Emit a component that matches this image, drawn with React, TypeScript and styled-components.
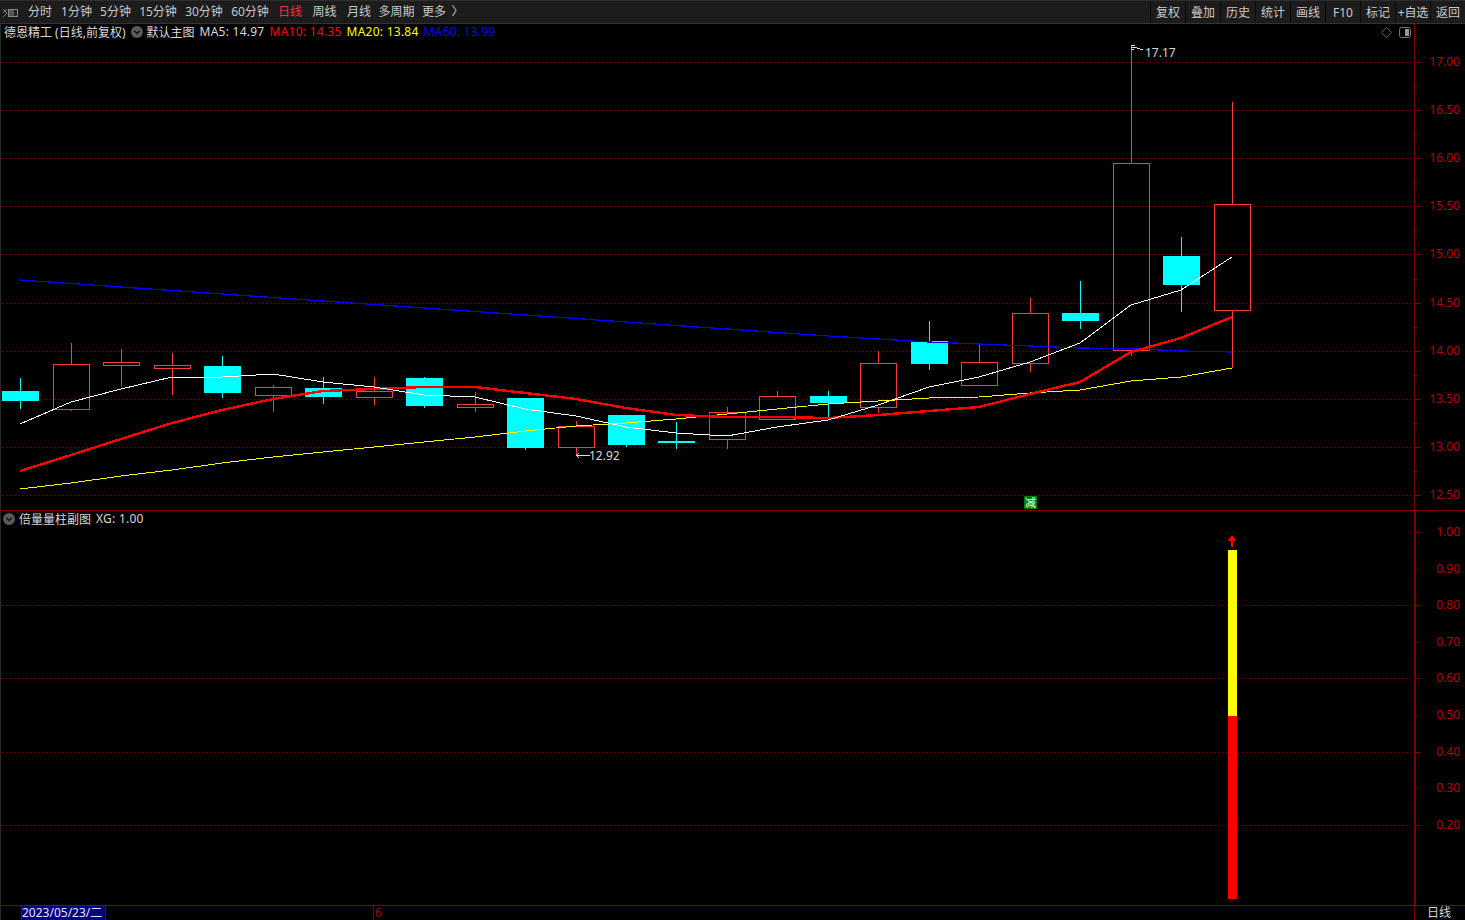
import React from "react";
import styled, { createGlobalStyle } from "styled-components";

const Global = createGlobalStyle`
  html, body { margin: 0; padding: 0; background: #000; overflow: hidden; }
  #root { width: 1465px; height: 920px; }
`;

const FONT = `"Noto Sans", "Noto Sans CJK SC", "Liberation Sans", sans-serif`;
const AXIS_RED = "#800000";
const GRID_RED = "#700000";
const LABEL_RED = "#b80000";
const UP = "#ff3c3c";
const DOWN = "#00ffff";

const Page = styled.div`
  width: 1465px;
  height: 920px;
  background: #000;
  display: flex;
  flex-direction: column;
  font-family: ${FONT};
  color: #d0d0d0;
  box-sizing: border-box;
  border-left: 1px solid #2c2c2c;
`;

const Toolbar = styled.div`
  height: 22px;
  flex: none;
  background: #1c1c1c;
  border-top: 1px solid #2e2e2e;
  border-bottom: 1px solid #333;
  display: flex;
  align-items: stretch;
  justify-content: space-between;
  box-sizing: content-box;
  margin-left: -1px;
`;

const LeftTools = styled.div`
  display: flex;
  align-items: center;
  padding-left: 2px;
`;

const ToolIcon = styled.svg`
  width: 16px;
  height: 12px;
  margin: 1px 5px 0 0;
  display: block;
`;

const PeriodItem = styled.span<{ $active?: boolean; $w: number }>`
  width: ${(p) => p.$w}px;
  text-align: center;
  font-size: 12px;
  line-height: 24px;
  white-space: nowrap;
  color: ${(p) => (p.$active ? "#e83a3a" : "#c8c8c8")};
`;

const RightTools = styled.div`
  display: flex;
  align-items: stretch;
`;

const ToolButton = styled.span<{ $tight?: boolean }>`
  width: 34px;
  border-left: 1px solid #0a0a0a;
  font-size: 12px;
  line-height: 24px;
  text-align: center;
  white-space: nowrap;
  color: #c8c8c8;
  letter-spacing: ${(p) => (p.$tight ? "-0.2px" : "0")};
`;

const Pane = styled.div<{ $h: number }>`
  height: ${(p) => p.$h}px;
  flex: none;
  position: relative;
  display: flex;
  margin-left: -1px;
  border-bottom: 1px solid ${AXIS_RED};
`;

const Plot = styled.svg`
  display: block;
  width: 1414px;
  height: 100%;
  flex: none;
`;

const Axis = styled.svg<{ $thick?: boolean }>`
  display: block;
  width: 51px;
  height: 100%;
  flex: none;
  box-sizing: border-box;
  border-left: ${(p) => (p.$thick ? 2 : 1)}px solid ${AXIS_RED};
`;

const AxisLabel = styled.text`
  font-family: ${FONT};
  font-size: 12px;
  fill: ${LABEL_RED};
  text-anchor: end;
  dominant-baseline: central;
`;

const Legend = styled.div<{ $top: number }>`
  position: absolute;
  left: 4px;
  top: ${(p) => p.$top}px;
  height: 17px;
  display: flex;
  align-items: center;
  font-size: 12px;
  white-space: nowrap;
  color: #d8d8d8;
`;

const LegendItem = styled.span<{ $color?: string; $ml?: number; $latin?: boolean }>`
  color: ${(p) => p.$color || "#d8d8d8"};
  margin-left: ${(p) => p.$ml ?? 0}px;
  letter-spacing: ${(p) => (p.$latin ? "0.25px" : "0")};
`;

const Chevron = styled.svg<{ $ml?: number }>`
  width: 12px;
  height: 12px;
  margin-left: ${(p) => p.$ml ?? 0}px;
  margin-right: 4px;
  display: block;
  flex: none;
`;

const PaneIcons = styled.div`
  position: absolute;
  left: 1381px;
  top: 3px;
  display: flex;
  align-items: center;
  gap: 7px;
`;

const PriceNote = styled.span<{ $x: number; $y: number }>`
  position: absolute;
  left: ${(p) => p.$x}px;
  top: ${(p) => p.$y}px;
  font-size: 12px;
  line-height: 16px;
  color: #d8d8d8;
`;

const SignalTag = styled.span`
  position: absolute;
  left: 1024px;
  top: 472px;
  width: 13px;
  height: 13px;
  background: #007a00;
  color: #e6ffe6;
  font-size: 11px;
  line-height: 13px;
  text-align: center;
`;

const StatusBar = styled.div`
  flex: 1;
  display: flex;
  margin-left: -1px;
  font-size: 12px;
  line-height: 14px;
`;

const DateCell = styled.span`
  margin-left: 21px;
  width: 83px;
  background: #000080;
  color: #e4e4ff;
  border-left: 1px solid ${AXIS_RED};
  border-right: 1px solid ${AXIS_RED};
  text-align: left;
  white-space: nowrap;
`;

const TickCell = styled.span`
  margin-left: 267px;
  border-left: 1px solid ${AXIS_RED};
  padding-left: 1px;
  color: #b00000;
  width: 1040px;
`;

const PeriodCell = styled.span`
  width: 50px;
  box-sizing: border-box;
  padding-left: 12px;
  border-left: 1px solid ${AXIS_RED};
  color: #d8d8d8;
  margin-left: -1px;
`;

type Candle = [number, number, number, number, number, boolean];
const X0 = 20.35;
const STEP = 50.47;
// bodyTop, bodyBottom, wickTop, wickBottom, isUp
const RAW: [number, number, number, number, boolean][] = [
  [391, 401, 378, 409, false],
  [364, 409, 343, 411, true],
  [362, 365, 349, 386, true],
  [365, 368, 353, 395, true],
  [366, 393, 356, 398, false],
  [387, 395, 385, 412, true],
  [388, 397, 377, 404, false],
  [391, 397, 377, 405, true],
  [378, 406, 377, 408, false],
  [404, 407, 392, 412, true],
  [398, 448, 398, 450, false],
  [426, 447, 421, 455, true],
  [415, 445, 415, 447, false],
  [441, 443, 422, 449, false],
  [412, 439, 407, 449, true],
  [396, 419, 391, 420, true],
  [396, 403, 391, 418, false],
  [363, 407, 351, 413, true],
  [341, 364, 321, 370, false],
  [362, 385, 344, 385, true],
  [313, 363, 298, 372, true],
  [313, 321, 281, 329, false],
  [163, 350, 45, 356, true],
  [256, 285, 237, 312, false],
  [204, 310, 102, 368, true],
];
const cx = (i: number) => Math.round(X0 + STEP * i);
const candles: Candle[] = RAW.map((r, i) => [cx(i), r[0], r[1], r[2], r[3], r[4]]);
const toLine = (ys: number[]) => ys.map((y, i) => `${cx(i)},${y}`).join(" ");

const MA5 = [424, 402, 389, 377, 377, 374, 382, 387, 395, 397, 409, 416, 427, 433, 436, 427, 420, 405, 387, 377, 362, 343, 305, 290, 257];
const MA10 = [471, 455, 439, 423, 410, 399, 391, 389, 387, 387, 393, 399, 408, 415, 417, 417, 418, 415, 411, 407, 394, 382, 352, 338, 317];
const MA20 = [489, 483, 476, 470, 463, 457, 452, 447, 442, 437, 431, 426, 423, 419, 414, 409, 404, 401, 398, 397, 393, 390, 381, 377, 368];
const MA60 = [280, 283.5, 287, 290.5, 294, 297.5, 301, 304.5, 308, 311.5, 315, 318.5, 322, 325.5, 329, 332.5, 336, 339, 342, 344, 346, 348, 348.6, 351, 352];

const PRICE_TICKS = ["17.00", "16.50", "16.00", "15.50", "15.00", "14.50", "14.00", "13.50", "13.00", "12.50"];
const priceY = (i: number) => Math.round(62 + 48.1 * i);
const SUB_TICKS = ["1.00", "0.90", "0.80", "0.70", "0.60", "0.50", "0.40", "0.30", "0.20"];
const subY = (i: number) => Math.round(532 + 36.6 * i);

const PERIODS: [string, number, boolean?][] = [
  ["分时", 34], ["1分钟", 39], ["5分钟", 39], ["15分钟", 46], ["30分钟", 46], ["60分钟", 46],
  ["日线", 34, true], ["周线", 35], ["月线", 34], ["多周期", 41], ["更多", 34], ["〉", 13],
];
const BUTTONS = ["复权", "叠加", "历史", "统计", "画线", "F10", "标记", "+自选", "返回"];

const GridLine: React.FC<{ y: number }> = ({ y }) => (
  <line x1={2} x2={1414} y1={y + 0.5} y2={y + 0.5} stroke={GRID_RED} strokeDasharray="1 3" />
);

const ChevronIcon: React.FC<{ ml?: number }> = ({ ml }) => (
  <Chevron $ml={ml} viewBox="0 0 12 12">
    <circle cx="6" cy="6" r="6" fill="#5a5a5a" />
    <path d="M3.2 4.8 L6 7.6 L8.8 4.8" fill="none" stroke="#111" strokeWidth="1.4" />
  </Chevron>
);

export default function App() {
  return (
    <Page>
      <Global />
      <Toolbar>
        <LeftTools>
          <ToolIcon viewBox="0 0 16 12">
            <path d="M1 2 L5 6 L1 10 M5 2 L1 6" fill="none" stroke="#777" strokeWidth="1" />
            <rect x="6.5" y="2.5" width="9" height="7" fill="#555" stroke="#888" />
            <rect x="12" y="3" width="3" height="6" fill="#222" />
          </ToolIcon>
          {PERIODS.map(([t, w, a]) => (
            <PeriodItem key={t} $w={w} $active={a}>{t}</PeriodItem>
          ))}
        </LeftTools>
        <RightTools>
          {BUTTONS.map((b) => (
            <ToolButton key={b} $tight={b === "+自选"}>{b}</ToolButton>
          ))}
        </RightTools>
      </Toolbar>

      <Pane $h={486}>
        <Plot viewBox="0 24 1414 486" shapeRendering="crispEdges">
          {PRICE_TICKS.map((_, i) => <GridLine key={i} y={priceY(i)} />)}
          {candles.map(([x, bt, bb, wt, wb, up], i) => {
            const left = x - 18;
            return up ? (
              <g key={i} stroke={UP} fill="none">
                <line x1={x + 0.5} x2={x + 0.5} y1={wt} y2={bt} />
                <line x1={x + 0.5} x2={x + 0.5} y1={bb} y2={wb} />
                <rect x={left + 0.5} y={bt + 0.5} width={36} height={bb - bt} />
              </g>
            ) : (
              <g key={i}>
                <line x1={x + 0.5} x2={x + 0.5} y1={wt} y2={wb} stroke={DOWN} />
                <rect x={left} y={bt} width={37} height={bb - bt} fill={DOWN} />
              </g>
            );
          })}
          <polyline points={toLine(MA60)} fill="none" stroke="#0000ff" strokeWidth={1.2} />
          <polyline points={toLine(MA20)} fill="none" stroke="#ffff00" strokeWidth={1} />
          <polyline points={toLine(MA10)} fill="none" stroke="#ff0000" strokeWidth={2.4} />
          <polyline points={toLine(MA5)} fill="none" stroke="#ffffff" strokeWidth={1} />
          <path d="M1143 50 L1134 47 L1131 47 M1131 45 L1135 45 M1131 49 L1134 49" fill="none" stroke="#e0e0e0" />
          <path d="M590 455.5 L577 455.5 M579 453 L577 455.5 L579 458" fill="none" stroke="#e0e0e0" />
        </Plot>
        <Axis viewBox="0 24 50 486">
          {PRICE_TICKS.map((t, i) => (
            <g key={t}>
              <line x1={0} x2={6} y1={priceY(i) + 0.5} y2={priceY(i) + 0.5} stroke={AXIS_RED} shapeRendering="crispEdges" />
              <line x1={0} x2={3} y1={priceY(i) - 23.5} y2={priceY(i) - 23.5} stroke={AXIS_RED} shapeRendering="crispEdges" />
              <AxisLabel x={45} y={62 + 48.1 * i - 0.5}>{t}</AxisLabel>
            </g>
          ))}
        </Axis>
        <Legend $top={-1}>
          <LegendItem>德恩精工 (日线,前复权)</LegendItem>
          <ChevronIcon ml={5} />
          <LegendItem>默认主图</LegendItem>
          <LegendItem $latin $ml={5}>MA5: 14.97</LegendItem>
          <LegendItem $latin $ml={5} $color="#ff0000">MA10: 14.35</LegendItem>
          <LegendItem $latin $ml={5} $color="#ffff00">MA20: 13.84</LegendItem>
          <LegendItem $latin $ml={5} $color="#0000ff">MA60: 13.99</LegendItem>
        </Legend>
        <PaneIcons>
          <svg width="11" height="11" viewBox="0 0 11 11">
            <path d="M5.5 0.5 L10.5 5.5 L5.5 10.5 L0.5 5.5 Z" fill="none" stroke="#666" />
          </svg>
          <svg width="12" height="11" viewBox="0 0 12 11">
            <rect x="0.5" y="0.5" width="11" height="10" rx="2" fill="none" stroke="#777" />
            <rect x="6" y="2" width="4" height="7" fill="#999" />
          </svg>
        </PaneIcons>
        <PriceNote $x={1145} $y={21}>17.17</PriceNote>
        <PriceNote $x={589} $y={424}>12.92</PriceNote>
        <SignalTag>减</SignalTag>
      </Pane>

      <Pane $h={394}>
        <Plot viewBox="0 511 1414 394" shapeRendering="crispEdges">
          {[2, 4, 6, 8].map((i) => <GridLine key={i} y={subY(i)} />)}
          <rect x={1228} y={550} width={9} height={166} fill="#ffff00" />
          <rect x={1228} y={716} width={9} height={183} fill="#ff0000" />
          <path d="M1232 535 L1236.5 541 L1233 541 L1233 547 L1231 547 L1231 541 L1227.5 541 Z" fill="#ff0000" shapeRendering="auto" />
        </Plot>
        <Axis $thick viewBox="0 511 49 394">
          {SUB_TICKS.map((t, i) => (
            <g key={t}>
              <line x1={0} x2={i % 2 ? 2 : 5} y1={subY(i) + 0.5} y2={subY(i) + 0.5} stroke={AXIS_RED} shapeRendering="crispEdges" />
              <AxisLabel x={44} y={subY(i) - 0.5}>{t}</AxisLabel>
            </g>
          ))}
        </Axis>
        <Legend $top={-1}>
          <ChevronIcon ml={-1} />
          <LegendItem>倍量量柱副图</LegendItem>
          <LegendItem $latin $ml={5}>XG: 1.00</LegendItem>
        </Legend>
      </Pane>

      <StatusBar>
        <DateCell>2023/05/23/二</DateCell>
        <TickCell>6</TickCell>
        <PeriodCell>日线</PeriodCell>
      </StatusBar>
    </Page>
  );
}
